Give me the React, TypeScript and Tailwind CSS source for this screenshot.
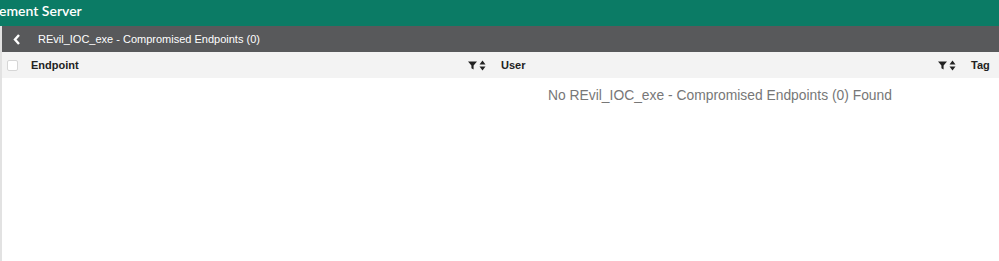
import React from "react";

const FilterSort: React.FC = () => (
  <span className="flex items-center gap-[2px] text-[#222]">
    <svg width="9" height="9" viewBox="0 0 10 10">
      <path d="M0 0.5h10L6.2 5v4.5L3.8 8V5z" fill="currentColor" />
    </svg>
    <svg width="7" height="11" viewBox="0 0 7 11">
      <path d="M3.5 0.5L6.5 4.5H0.5z M3.5 10.5L0.5 6.5H6.5z" fill="currentColor" />
    </svg>
  </span>
);

export default function App() {
  return (
    <div className="w-[999px] h-[261px] bg-white overflow-hidden font-['Liberation_Sans',Arial,sans-serif]">
      <div className="h-[26px] bg-[#0b7b65] pt-[4px]">
        <span className="block text-white text-[14px] font-semibold font-['Lato',sans-serif] leading-[14px] -ml-[1px]">
          ement Server
        </span>
      </div>
      <div className="border-l-2 border-[#e2e2e2] h-[235px]">
        <div className="h-[26px] bg-[#58595b] flex items-center text-white">
          <svg className="ml-[11px]" width="8" height="11" viewBox="0 0 8 11">
            <path d="M6 1L2 5.5L6 10" stroke="white" strokeWidth="2.4" fill="none" />
          </svg>
          <span className="ml-[17px] text-[11px]">REvil_IOC_exe - Compromised Endpoints (0)</span>
        </div>
        <div className="h-[26px] bg-[#f3f3f3] flex items-center text-[11px] font-bold text-[#222]">
          <span className="ml-[5px] w-[11px] h-[11px] border border-[#d6d6d6] bg-white rounded-[2px]" />
          <span className="ml-[13px] w-[437px]">Endpoint</span>
          <FilterSort />
          <span className="ml-[15px] w-[437px]">User</span>
          <FilterSort />
          <span className="ml-[15px]">Tag</span>
        </div>
        <div className="pt-[7px] pl-[546px] text-[13.85px] text-[#777]">
          No REvil_IOC_exe - Compromised Endpoints (0) Found
        </div>
      </div>
    </div>
  );
}
